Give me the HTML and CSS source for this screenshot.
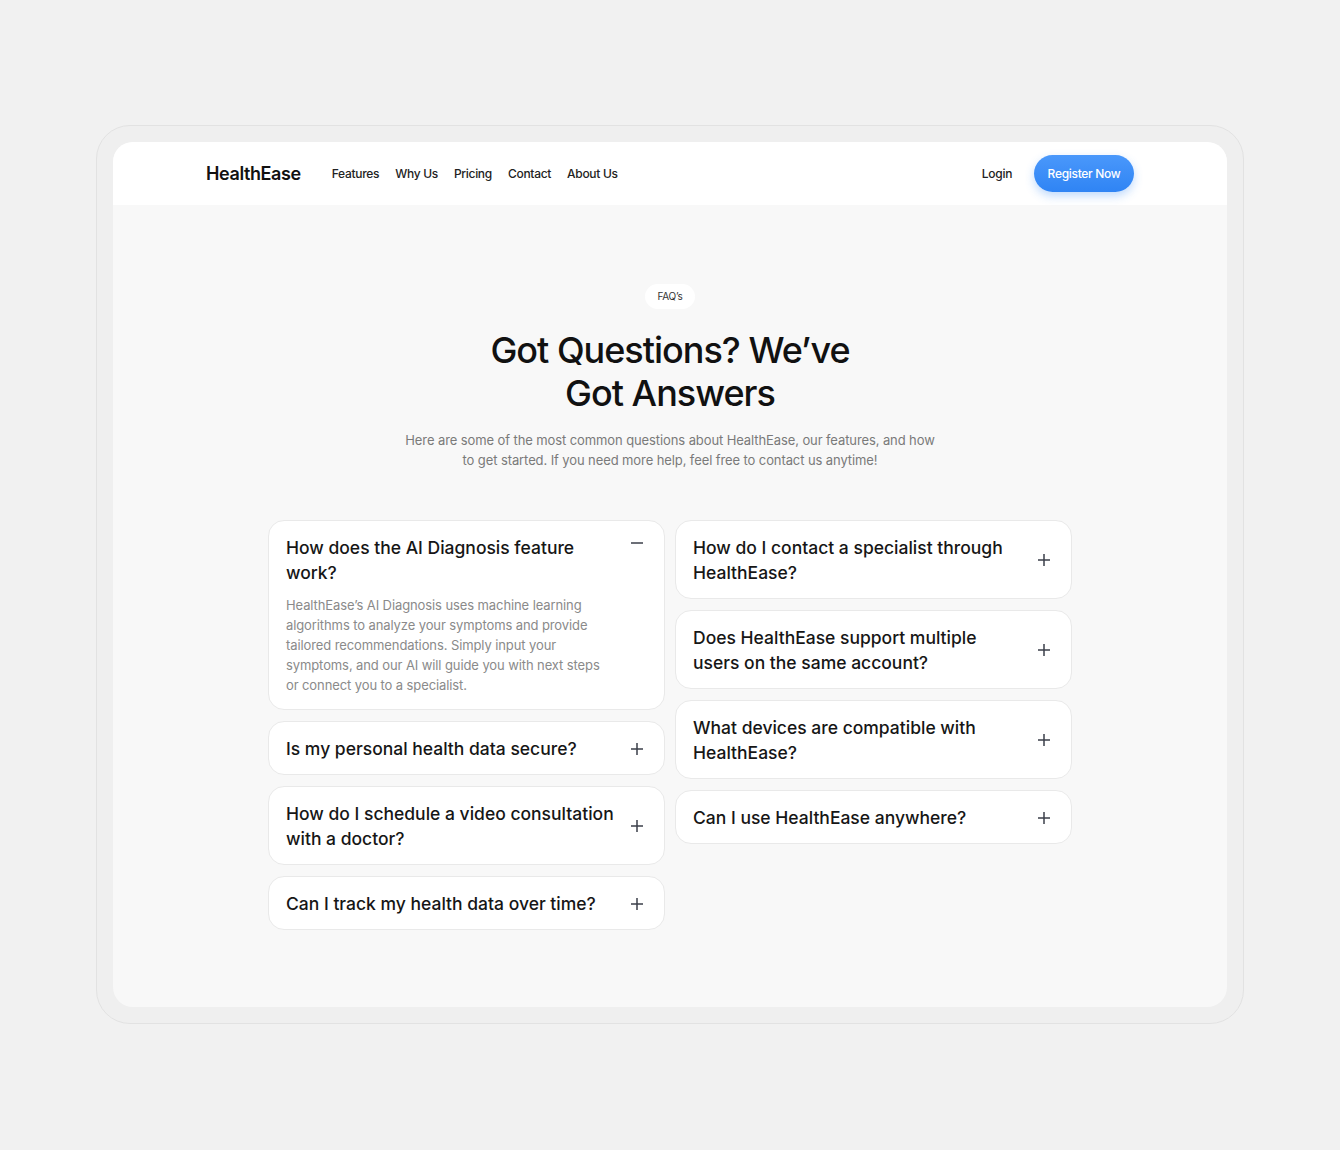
FILE: index.html
```html
<!DOCTYPE html>
<html lang="en">
<head>
<meta charset="utf-8">
<title>HealthEase FAQ</title>
<link rel="stylesheet" href="styles.css">
</head>
<body>
<div class="frame">
  <div class="screen">
    <header class="topbar">
      <div class="brand">HealthEase</div>
      <nav class="links">
        <a href="#">Features</a>
        <a href="#">Why Us</a>
        <a href="#">Pricing</a>
        <a href="#">Contact</a>
        <a href="#">About Us</a>
      </nav>
      <div class="actions">
        <a href="#" class="login">Login</a>
        <a href="#" class="register">Register Now</a>
      </div>
    </header>
    <main class="faq">
      <span class="pill">FAQ’s</span>
      <h1 class="title">Got Questions? We’ve<br>Got Answers</h1>
      <p class="lead">Here are some of the most common questions about HealthEase, our features, and how to get started. If you need more help, feel free to contact us anytime!</p>
      <div class="grid">
        <div class="col">
          <div class="item open">
            <div class="q-row">
              <div class="q-body">
                <div class="q">How does the AI Diagnosis feature work?</div>
                <p class="a">HealthEase’s AI Diagnosis uses machine learning algorithms to analyze your symptoms and provide tailored recommendations. Simply input your symptoms, and our AI will guide you with next steps or connect you to a specialist.</p>
              </div>
              <svg class="ico" viewBox="0 0 14 14"><path d="M1 7h12"/></svg>
            </div>
          </div>
          <div class="item"><div class="q-row"><div class="q">Is my personal health data secure?</div><svg class="ico" viewBox="0 0 14 14"><path d="M1 7h12M7 1v12"/></svg></div></div>
          <div class="item"><div class="q-row"><div class="q">How do I schedule a video consultation with a doctor?</div><svg class="ico" viewBox="0 0 14 14"><path d="M1 7h12M7 1v12"/></svg></div></div>
          <div class="item"><div class="q-row"><div class="q">Can I track my health data over time?</div><svg class="ico" viewBox="0 0 14 14"><path d="M1 7h12M7 1v12"/></svg></div></div>
        </div>
        <div class="col">
          <div class="item"><div class="q-row"><div class="q">How do I contact a specialist through HealthEase?</div><svg class="ico" viewBox="0 0 14 14"><path d="M1 7h12M7 1v12"/></svg></div></div>
          <div class="item"><div class="q-row"><div class="q">Does HealthEase support multiple users on the same account?</div><svg class="ico" viewBox="0 0 14 14"><path d="M1 7h12M7 1v12"/></svg></div></div>
          <div class="item"><div class="q-row"><div class="q">What devices are compatible with HealthEase?</div><svg class="ico" viewBox="0 0 14 14"><path d="M1 7h12M7 1v12"/></svg></div></div>
          <div class="item"><div class="q-row"><div class="q">Can I use HealthEase anywhere?</div><svg class="ico" viewBox="0 0 14 14"><path d="M1 7h12M7 1v12"/></svg></div></div>
        </div>
      </div>
    </main>
  </div>
</div>
</body>
</html>
```

FILE: styles.css
```css
* { box-sizing: border-box; }
html, body { margin: 0; padding: 0; }
body {
  background: #f1f1f1;
  font-family: Inter, "Liberation Sans", sans-serif;
  color: #1a1a1a;
  padding-top: 125px;
}
a { color: inherit; text-decoration: none; }

.frame {
  width: 1148px;
  margin: 0 auto;
  padding: 16px;
  background: #efefef;
  border: 1px solid #e2e2e2;
  border-radius: 34px;
}
.screen {
  background: #f8f8f8;
  border-radius: 20px;
  overflow: hidden;
  height: 865px;
}
.topbar {
  height: 63px;
  background: #ffffff;
  display: flex;
  align-items: center;
  padding: 0 93px;
}
.brand {
  font-size: 18px;
  font-weight: 600;
  letter-spacing: -0.4px;
  color: #111;
}
.links {
  display: flex;
  gap: 16px;
  margin-left: 31px;
  font-size: 12px;
  font-weight: 500;
  letter-spacing: -0.3px;
  color: #222;
}
.actions {
  margin-left: auto;
  display: flex;
  align-items: center;
  gap: 22px;
  font-size: 12px;
  font-weight: 500;
  letter-spacing: -0.3px;
}
.login { color: #222; }
.register {
  height: 37px;
  padding: 0 13.5px;
  display: flex;
  align-items: center;
  border-radius: 19px;
  color: #fff;
  background: linear-gradient(180deg, #4a98fb 0%, #2f84f4 100%);
  box-shadow: 0 4px 10px rgba(47, 132, 244, 0.3);
}

.faq {
  display: flex;
  flex-direction: column;
  align-items: center;
  padding-top: 79px;
}
.pill {
  background: #fff;
  border-radius: 13px;
  padding: 0 13px;
  height: 25px;
  line-height: 25px;
  font-size: 10px;
  letter-spacing: -0.3px;
  color: #333;
}
.title {
  margin: 20px 0 0;
  font-size: 36px;
  line-height: 43px;
  font-weight: 500;
  letter-spacing: -1px;
  text-align: center;
  color: #111;
}
.lead {
  margin: 15px 0 0;
  width: 540px;
  font-size: 13px;
  line-height: 20px;
  letter-spacing: -0.1px;
  color: #7a7a7a;
  text-align: center;
}
.grid {
  margin-top: 50px;
  display: grid;
  grid-template-columns: 397px 397px;
  gap: 10px;
  align-items: start;
}
.col {
  display: flex;
  flex-direction: column;
  gap: 11px;
}
.item {
  background: #fff;
  border: 1px solid #e9e9e9;
  border-radius: 16px;
  padding: 14px 20px 13px 17px;
}
.q-row {
  display: flex;
  align-items: center;
  justify-content: space-between;
  gap: 12px;
}
.open .q-row { align-items: flex-start; }
.q {
  font-size: 17.5px;
  line-height: 25px;
  font-weight: 500;
  letter-spacing: 0;
  color: #161616;
  max-width: 335px;
}
.open .q { max-width: 310px; }
.a {
  margin: 10px 0 1px;
  width: 320px;
  font-size: 13px;
  line-height: 20px;
  letter-spacing: -0.1px;
  color: #8a8a8a;
}
.ico {
  width: 14px;
  height: 14px;
  flex: none;
  fill: none;
  stroke: #3b3f4a;
  stroke-width: 1.5;
}
.open .ico { margin-top: 1px; }
```
